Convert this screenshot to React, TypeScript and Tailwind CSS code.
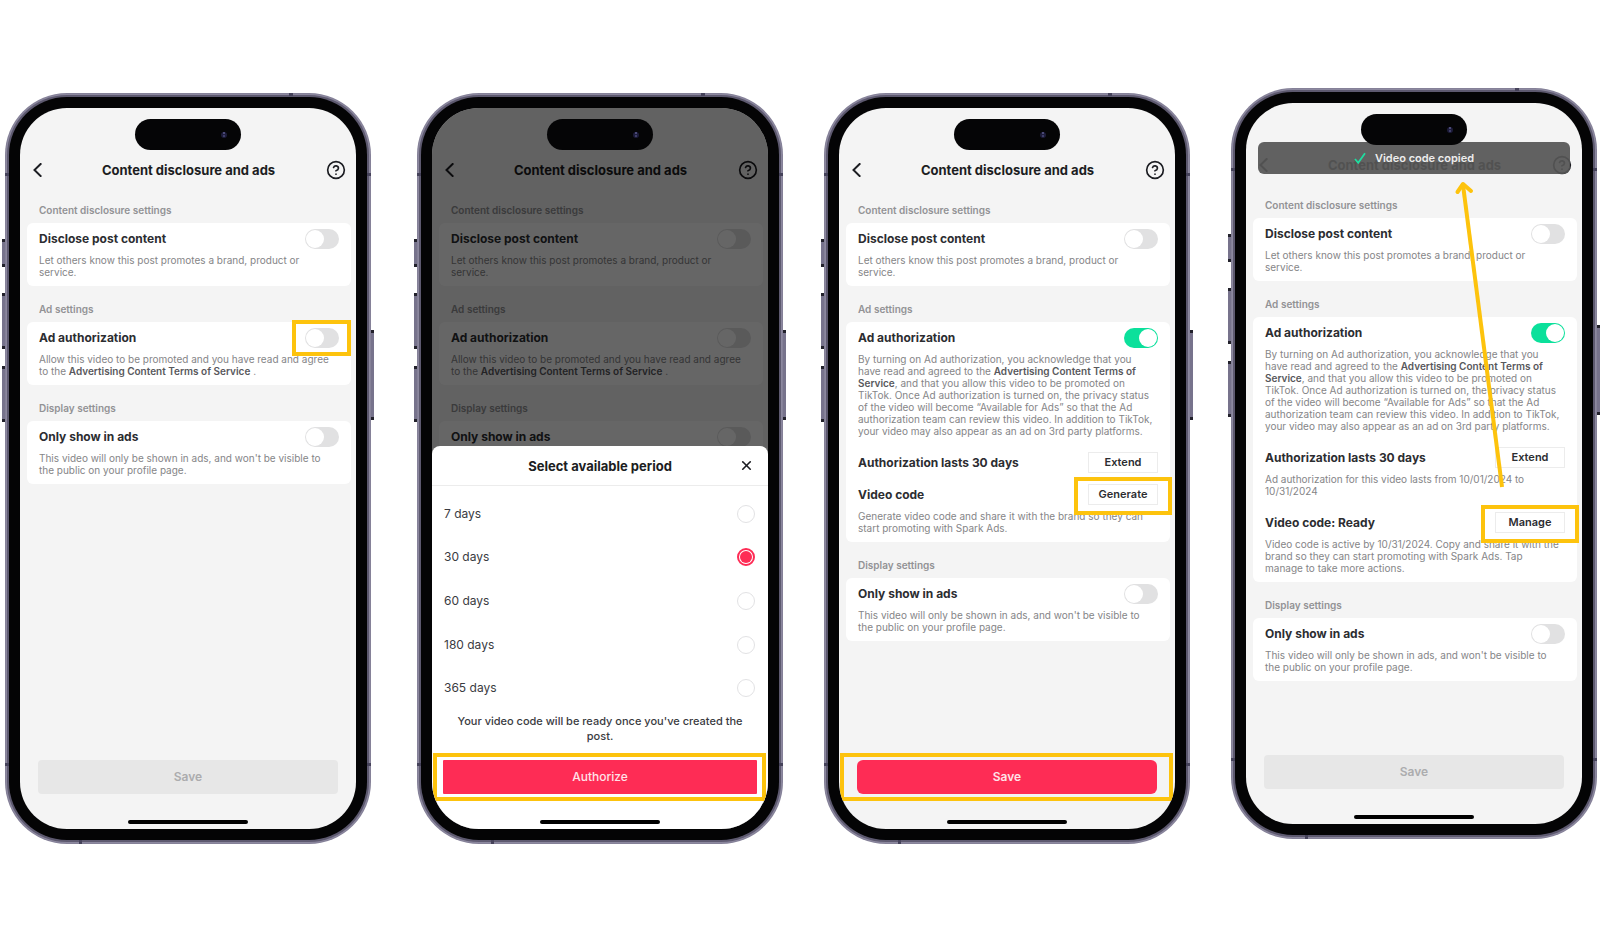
import { useId, useState } from "react";
import type { ReactNode } from "react";
import clsx from "clsx";
import { CircleHelp, X } from "lucide-react";

const Highlight = ({ className }: { className: string }) => (
  <span
    aria-hidden
    className={clsx(
      "absolute z-10 border-4 border-[#fdc30d] pointer-events-none",
      className
    )}
  />
);

const SideButton = ({ className }: { className: string }) => (
  <span
    aria-hidden
    className={clsx(
      "absolute w-[3px] bg-[#77738c] border-y-[3px] border-[#22212b]",
      className
    )}
  />
);

const Antenna = ({ className }: { className: string }) => (
  <span aria-hidden className={clsx("absolute bg-[#45425a]", className)} />
);

const Island = () => (
  <div className="relative z-30 mt-[11px] h-[31px] w-[106px] shrink-0 self-center rounded-full bg-[#050506] flex items-center justify-end pr-[14px]">
    <span className="size-[6px] rounded-full bg-[#1d1c3a] flex flex-col items-center justify-center gap-px">
      <span className="size-[2px] rounded-full bg-[#5b5a8c]" />
      <span className="size-[2px] rounded-full bg-[#4a4978]" />
    </span>
  </div>
);

const Phone = ({
  className,
  children,
}: {
  className?: string;
  children: ReactNode;
}) => (
  <section
    className={clsx(
      "relative grow basis-[366px] max-w-[400px] self-start rounded-[62px] bg-[#858198] p-px",
      className
    )}
  >
    <SideButton className="-left-[3px] top-[146px] h-7" />
    <SideButton className="-left-[3px] top-[200px] h-14" />
    <SideButton className="-left-[3px] top-[273px] h-14" />
    <SideButton className="-right-[3px] top-[237px] h-[90px]" />
    <div className="rounded-[61px] bg-[#8c889f] p-px">
      <div className="rounded-[60px] bg-[#5d596f] p-[2px]">
        <div className="rounded-[58px] bg-[#040405] p-[11px]">
          <div className="relative flex min-h-[721px] flex-col overflow-hidden rounded-[47px] bg-[#f4f4f4]">
            {children}
          </div>
        </div>
      </div>
    </div>
    <Antenna className="left-0 top-[80px] h-[3px] w-1" />
    <Antenna className="right-0 top-[80px] h-[3px] w-1" />
    <Antenna className="left-0 bottom-[78px] h-[3px] w-1" />
    <Antenna className="right-0 bottom-[78px] h-[3px] w-1" />
    <Antenna className="right-[78px] top-0 h-[3px] w-1" />
    <Antenna className="left-[74px] bottom-0 h-1 w-[3px]" />
  </section>
);

const Header = () => (
  <header className="mt-[10px] flex h-5 items-center justify-between pl-[11px] pr-[10px] text-[#1c1d22]">
    <button aria-label="Back" className="flex h-5 w-5 items-center pl-0.5">
      <svg width="9" height="14" viewBox="0 0 9 14" fill="none">
        <path
          d="M7.6 1 1.5 7l6.1 6"
          stroke="currentColor"
          strokeWidth="2"
          strokeLinecap="square"
        />
      </svg>
    </button>
    <h1 className="text-[13px] font-bold leading-5">
      Content disclosure and ads
    </h1>
    <button aria-label="Help">
      <CircleHelp size={20} strokeWidth={2} />
    </button>
  </header>
);

const Section = ({
  title,
  first,
  children,
}: {
  title: string;
  first?: boolean;
  children: ReactNode;
}) => (
  <section className={first ? "mt-[22px]" : "mt-[15px]"}>
    <h2 className="ml-[19px] h-4 text-[10px] font-semibold leading-4 text-[#929294]">
      {title}
    </h2>
    <div className="ml-[7px] mr-[5px] mt-[5px] flex flex-col gap-[11px] rounded-md bg-white px-3 pb-1 pt-[6px]">
      {children}
    </div>
  </section>
);

const Desc = ({ children }: { children: ReactNode }) => (
  <p className="mb-1 mt-[5px] pr-[2px] text-[10px] leading-[12px] text-[#858587]">
    {children}
  </p>
);

const Toggle = ({
  label,
  on = false,
  highlight,
  children,
}: {
  label: string;
  on?: boolean;
  highlight?: boolean;
  children: ReactNode;
}) => {
  const id = useId();
  const [checked, setChecked] = useState(on);
  return (
    <div>
      <div className="flex h-5 items-center justify-between">
        <label
          htmlFor={id}
          className="text-[12px] font-bold leading-5 text-[#2c2d31]"
        >
          {label}
        </label>
        <span className="relative flex">
          <input
            id={id}
            type="checkbox"
            role="switch"
            checked={checked}
            onChange={(e) => setChecked(e.target.checked)}
            className="h-5 w-[34px] appearance-none rounded-full bg-[#e1e1e2] p-px before:block before:size-[18px] before:rounded-full before:bg-white checked:bg-[#0be09b] checked:before:ml-[14px]"
          />
          {highlight && (
            <Highlight className="-left-[13px] -right-3 -top-2 -bottom-2" />
          )}
        </span>
      </div>
      <Desc>{children}</Desc>
    </div>
  );
};

const ActionRow = ({
  label,
  action,
  highlight,
  children,
}: {
  label: string;
  action: string;
  highlight?: boolean;
  children?: ReactNode;
}) => (
  <div>
    <div className="flex h-[21px] items-center justify-between">
      <h3 className="text-[12px] font-bold leading-5 text-[#2c2d31]">
        {label}
      </h3>
      <span className="relative flex">
        <button className="h-[21px] w-[70px] border border-[#ececec] bg-white text-[11px] font-semibold leading-none text-[#2c2d31]">
          {action}
        </button>
        {highlight && (
          <Highlight className="-left-[14px] -right-[14px] -top-[7px] -bottom-[10px]" />
        )}
      </span>
    </div>
    {children && <Desc>{children}</Desc>}
  </div>
);

const Terms = ({ children }: { children: ReactNode }) => (
  <a href="#terms" className="font-semibold text-[#58585c]">
    {children}
  </a>
);

const Disclosure = () => (
  <Section title="Content disclosure settings" first>
    <Toggle label="Disclose post content">
      Let others know this post promotes a brand, product or service.
    </Toggle>
  </Section>
);

const Display = () => (
  <Section title="Display settings">
    <Toggle label="Only show in ads">
      This video will only be shown in ads, and won't be visible to the&nbsp;public
      on your profile page.
    </Toggle>
  </Section>
);

const AdSettingsOff = ({ highlight }: { highlight?: boolean }) => (
  <Section title="Ad settings">
    <Toggle label="Ad authorization" highlight={highlight}>
      Allow this video to be promoted and you have read and agree to the{" "}
      <Terms>Advertising Content Terms of Service</Terms> .
    </Toggle>
  </Section>
);

const AdSettingsOn = ({ children }: { children: ReactNode }) => (
  <Section title="Ad settings">
    <Toggle label="Ad authorization" on>
      By turning on Ad authorization, you acknowledge that you have&nbsp;read and
      agreed to the <Terms>Advertising Content Terms of Service</Terms>, and
      that you allow this video to be promoted on TikTok. Once Ad authorization
      is turned on, the privacy status of&nbsp;the video will become “Available for
      Ads” so that the Ad authorization team can review this video. In addition
      to TikTok, your video may also appear as an ad on 3rd party platforms.
    </Toggle>
    {children}
  </Section>
);

const HomeBar = () => (
  <div className="mb-[5px] mt-[26px] h-1 w-[120px] shrink-0 self-center rounded-full bg-black" />
);

const Save = ({ active }: { active?: boolean }) => (
  <footer className="mt-auto flex flex-col">
    <div className="relative px-[18px]">
      <button
        disabled={!active}
        className={clsx(
          "h-[34px] w-full text-[12px] font-semibold",
          active
            ? "rounded-md bg-[#fe2c55] text-[#ffe3e8]"
            : "rounded bg-[#e7e7e7] text-[#acacae]"
        )}
      >
        Save
      </button>
      {active && (
        <Highlight className="left-px right-[2px] -top-[7px] -bottom-[7px]" />
      )}
    </div>
    <HomeBar />
  </footer>
);

const periods = [7, 30, 60, 180, 365];

const PeriodSheet = () => {
  const [period, setPeriod] = useState(30);
  return (
    <>
      <div className="absolute inset-0 z-20 bg-black/60" />
      <div
        role="dialog"
        aria-label="Select available period"
        className="absolute inset-x-0 bottom-0 top-[338px] z-30 flex flex-col rounded-t-lg bg-white"
      >
        <div className="grid h-10 grid-cols-[20px_1fr_20px] items-center border-b border-[#ececec] px-3 text-[#1c1d22]">
          <h2 className="col-start-2 text-center text-[13px] font-bold leading-5">
            Select available period
          </h2>
          <button aria-label="Close" className="flex justify-center">
            <X size={15} strokeWidth={2.6} />
          </button>
        </div>
        <div className="mt-[6px] flex flex-1 flex-col pl-3 pr-[13px]">
          {periods.map((days) => (
            <label
              key={days}
              className="flex flex-1 items-center justify-between text-[12px] leading-4 text-[#3a3b3f]"
            >
              {days} days
              <input
                type="radio"
                name="period"
                checked={period === days}
                onChange={() => setPeriod(days)}
                className="size-[18px] appearance-none rounded-full border border-[#e2e2e4] p-[2px] checked:border-2 checked:border-[#fe2c55] checked:p-px before:block before:size-full before:rounded-full checked:before:bg-[#fe2c55]"
              />
            </label>
          ))}
        </div>
        <p className="mt-1 px-4 text-center text-[11px] font-medium leading-[15px] text-[#3a3b3f]">
          Your video code will be ready once you've created the post.
        </p>
        <div className="relative mt-4 px-[11px]">
          <button className="h-[34px] w-full rounded-[1px] bg-[#fe2c55] text-[12px] font-medium text-[#ffe3e8]">
            Authorize
          </button>
          <Highlight className="left-px right-[2px] -top-[7px] -bottom-[7px]" />
        </div>
        <HomeBar />
      </div>
    </>
  );
};

const Toast = () => (
  <div
    role="status"
    className="absolute inset-x-3 top-[39px] z-20 flex h-8 items-center justify-center gap-[9px] rounded-md bg-[#555555]/93 text-[11px] font-semibold text-[#ededed]"
  >
    <svg width="12" height="12" viewBox="0 0 12 12" fill="none">
      <path d="m1 7 3.2 3.8L11 1.2" stroke="#1fdc9f" strokeWidth="1.8" />
    </svg>
    Video code copied
  </div>
);

const Arrow = () => (
  <svg
    aria-hidden
    className="pointer-events-none absolute left-0 top-0 z-20"
    width="300"
    height="400"
    fill="none"
    stroke="#fdc30d"
    strokeWidth="4"
  >
    <path d="M256 384 217 82" />
    <path
      d="M211.5 89 217 81l8 7"
      strokeLinecap="round"
      strokeLinejoin="round"
    />
  </svg>
);

const App = () => (
  <main className="flex min-h-screen flex-wrap content-start justify-center gap-[41px] bg-white pb-20 pl-[5px] pr-[3px] pt-[93px] font-['Inter','Liberation_Sans',sans-serif]">
    <Phone className="mr-[5px]">
      <Island />
      <Header />
      <Disclosure />
      <AdSettingsOff highlight />
      <Display />
      <Save />
    </Phone>
    <Phone>
      <Island />
      <Header />
      <Disclosure />
      <AdSettingsOff />
      <Display />
      <PeriodSheet />
    </Phone>
    <Phone>
      <Island />
      <Header />
      <Disclosure />
      <AdSettingsOn>
        <ActionRow label="Authorization lasts 30 days" action="Extend" />
        <ActionRow label="Video code" action="Generate" highlight>
          Generate video code and share it with the brand so they can start
          promoting with Spark Ads.
        </ActionRow>
      </AdSettingsOn>
      <Display />
      <Save active />
    </Phone>
    <Phone className="-mt-[5px]">
      <Island />
      <Header />
      <Toast />
      <Disclosure />
      <AdSettingsOn>
        <ActionRow label="Authorization lasts 30 days" action="Extend">
          Ad authorization for this video lasts from 10/01/2024 to 10/31/2024
        </ActionRow>
        <ActionRow label="Video code: Ready" action="Manage" highlight>
          Video code is active by 10/31/2024. Copy and share it with the brand
          so they can start promoting with Spark Ads. Tap manage&nbsp;to take
          more actions.
        </ActionRow>
      </AdSettingsOn>
      <Display />
      <Save />
      <Arrow />
    </Phone>
  </main>
);

export default App;
